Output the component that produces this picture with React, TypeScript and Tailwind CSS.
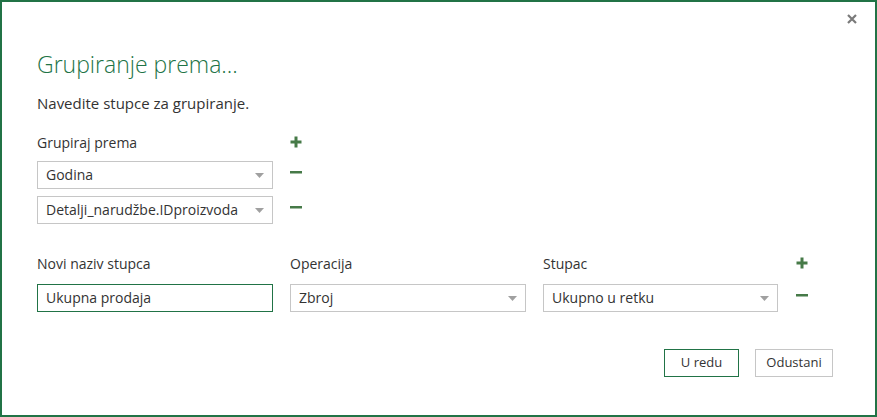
import React from 'react';

const font = { fontFamily: '"Open Sans", "Noto Sans", "Liberation Sans", sans-serif' };

function PlusIcon() {
  return (
    <svg width="12" height="12" viewBox="0 0 12 12" className="block">
      <rect x="0.5" y="4.5" width="11" height="3" fill="#467a48" />
      <rect x="4.5" y="0.5" width="3" height="11" fill="#467a48" />
    </svg>
  );
}

function MinusIcon() {
  return (
    <svg width="12" height="12" viewBox="0 0 12 12" className="block">
      <rect x="0" y="5" width="12" height="2.5" fill="#467a48" />
    </svg>
  );
}

function Select({ value, width }: { value: string; width: string }) {
  return (
    <div className={`${width} h-[28px] border border-[#c6c6c6] bg-white flex items-center justify-between pl-[8px] pr-[8px]`}>
      <span className="text-[14px] text-[#333333] whitespace-nowrap leading-none">{value}</span>
      <svg width="9" height="5" viewBox="0 0 9 5" className="block shrink-0">
        <path d="M0 0h9L4.5 5z" fill="#a0a0a0" />
      </svg>
    </div>
  );
}

export default function App() {
  return (
    <div style={font} className="relative w-[877px] h-[417px] bg-white border-2 border-[#217346] overflow-hidden">
      {/* close */}
      <button className="absolute top-[11px] right-[17px] w-[12px] h-[12px] flex items-center justify-center">
        <svg width="10" height="10" viewBox="0 0 10 10">
          <path d="M1 1L9 9M9 1L1 9" stroke="#7a7a7a" strokeWidth="2.2" />
        </svg>
      </button>

      <div className="pl-[35px] pt-[46px]">
        <h1 className="text-[23px] leading-[32px] font-light text-[#217346]">Grupiranje prema...</h1>
        <p className="mt-[13px] text-[15px] leading-[20px] text-[#333333]">Navedite stupce za grupiranje.</p>

        {/* group by */}
        <div className="mt-[19px] flex flex-col gap-[7px]">
          <div className="flex items-center gap-[17px] h-[20px]">
            <span className="w-[236px] text-[14px] text-[#333333]">Grupiraj prema</span>
            <PlusIcon />
          </div>
          <div className="flex items-center gap-[17px] mt-[2px]">
            <Select value="Godina" width="w-[236px]" />
            <div className="-mt-[6px]"><MinusIcon /></div>
          </div>
          <div className="flex items-center gap-[17px]">
            <Select value="Detalji_narudžbe.IDproizvoda" width="w-[236px]" />
            <div className="-mt-[6px]"><MinusIcon /></div>
          </div>
        </div>

        {/* aggregations */}
        <div className="mt-[29px] flex gap-[17px]">
          <div className="flex flex-col gap-[11px]">
            <span className="h-[20px] text-[14px] text-[#333333]">Novi naziv stupca</span>
            <div className="w-[236px] h-[28px] border border-[#217346] flex items-center pl-[8px]">
              <span className="text-[14px] text-[#333333] leading-none">Ukupna prodaja</span>
            </div>
          </div>
          <div className="flex flex-col gap-[11px]">
            <span className="h-[20px] text-[14px] text-[#333333]">Operacija</span>
            <Select value="Zbroj" width="w-[236px]" />
          </div>
          <div className="flex flex-col gap-[11px]">
            <span className="h-[20px] text-[14px] text-[#333333]">Stupac</span>
            <Select value="Ukupno u retku" width="w-[235px]" />
          </div>
          <div className="flex flex-col pl-[1px] pt-[4px] gap-[20px]">
            <PlusIcon />
            <MinusIcon />
          </div>
        </div>
      </div>

      {/* footer */}
      <div className="absolute right-[42px] bottom-[38px] flex gap-[16px]">
        <button className="w-[75px] h-[28px] border border-[#217346] text-[13px] text-[#333333] bg-white">U redu</button>
        <button className="w-[78px] h-[28px] border border-[#c6c6c6] text-[13px] text-[#333333] bg-white">Odustani</button>
      </div>
    </div>
  );
}
